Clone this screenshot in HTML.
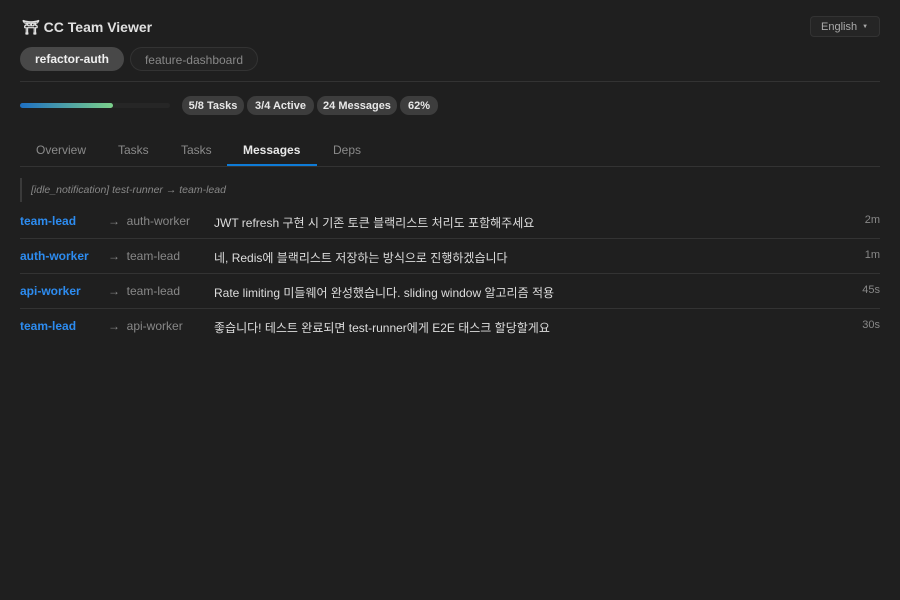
<!DOCTYPE html>
<html><head><meta charset="utf-8"><style>
*{margin:0;padding:0;box-sizing:border-box}
body{width:900px;height:600px;background:#1f1f1f;color:#ccc;font-family:"Liberation Sans","Noto Sans CJK KR",sans-serif;position:relative;overflow:hidden}
.title{position:absolute;left:22px;top:19px;font-size:14px;font-weight:bold;color:#e0e0e0}
.lang{position:absolute;left:810px;top:16px;width:70px;height:21px;border:1px solid #333;border-radius:4px;background:#252525;font-size:11px;color:#aaa;padding:4px 0 0 10px}
.lang span{font-size:6px;margin-left:5px;vertical-align:2px}
.pill{position:absolute;top:47px;height:24px;border-radius:12px;font-size:12px;padding-top:5px;text-align:center}
.hr{position:absolute;left:20px;width:860px;height:1px;background:#333}
.bar{position:absolute;left:20px;top:103px;width:150px;height:5px;background:#262626;border-radius:3px}
.bar i{display:block;width:93px;height:5px;border-radius:3px;background:linear-gradient(90deg,#1e6fc2,#7bd08a)}
.b{position:absolute;top:96px;height:19px;border-radius:9px;background:#3d3d3d;font-size:11px;font-weight:bold;color:#e8e8e8;padding:4px 0 0;text-align:center}
.tab{position:absolute;top:143px;font-size:12px;color:#8a8a8a}
.idle{position:absolute;left:20px;top:178px;height:24px;border-left:2px solid #3a3a3a;padding:6px 0 0 9px;font-style:italic;font-size:10.5px;color:#888}
.row{position:absolute;left:20px;width:860px;height:35px;font-size:12px}
.row span{position:absolute;top:10px}
.f{left:0;color:#2d8cf0;font-weight:bold}
.a{left:88px;color:#888}
.m{left:194px;color:#ddd}
.row .t{right:0;color:#888;font-size:11px;top:10px}
</style></head><body>
<div class="title">⛩ CC Team Viewer</div>
<div class="lang">English<span>▼</span></div>
<div class="pill" style="left:20px;width:104px;background:#484848;color:#f0f0f0;font-weight:bold">refactor-auth</div>
<div class="pill" style="left:130px;width:128px;border:1px solid #333;background:#232323;color:#888">feature-dashboard</div>
<div class="hr" style="top:81px"></div>
<div class="bar"><i></i></div>
<div class="b" style="left:182px;width:62px">5/8 Tasks</div>
<div class="b" style="left:247px;width:67px">3/4 Active</div>
<div class="b" style="left:317px;width:80px">24 Messages</div>
<div class="b" style="left:400px;width:38px">62%</div>
<div class="tab" style="left:36px">Overview</div>
<div class="tab" style="left:118px">Tasks</div>
<div class="tab" style="left:181px">Tasks</div>
<div class="tab" style="left:243px;color:#e8e8e8;font-weight:bold">Messages</div>
<div class="tab" style="left:333px">Deps</div>
<div class="hr" style="top:166px"></div>
<div style="position:absolute;left:227px;top:164px;width:90px;height:2px;background:#0e7bd6"></div>
<div class="idle">[idle_notification] test-runner → team-lead</div>
<div class="row" style="top:204px;border-bottom:1px solid #333"><span class="f">team-lead</span><span class="a">→&nbsp;&nbsp;auth-worker</span><span class="m">JWT refresh 구현 시 기존 토큰 블랙리스트 처리도 포함해주세요</span><span class="t">2m</span></div>
<div class="row" style="top:239px;border-bottom:1px solid #333"><span class="f">auth-worker</span><span class="a">→&nbsp;&nbsp;team-lead</span><span class="m">네, Redis에 블랙리스트 저장하는 방식으로 진행하겠습니다</span><span class="t">1m</span></div>
<div class="row" style="top:274px;border-bottom:1px solid #333"><span class="f">api-worker</span><span class="a">→&nbsp;&nbsp;team-lead</span><span class="m">Rate limiting 미들웨어 완성했습니다. sliding window 알고리즘 적용</span><span class="t">45s</span></div>
<div class="row" style="top:309px"><span class="f">team-lead</span><span class="a">→&nbsp;&nbsp;api-worker</span><span class="m">좋습니다! 테스트 완료되면 test-runner에게 E2E 태스크 할당할게요</span><span class="t">30s</span></div>
</body></html>
